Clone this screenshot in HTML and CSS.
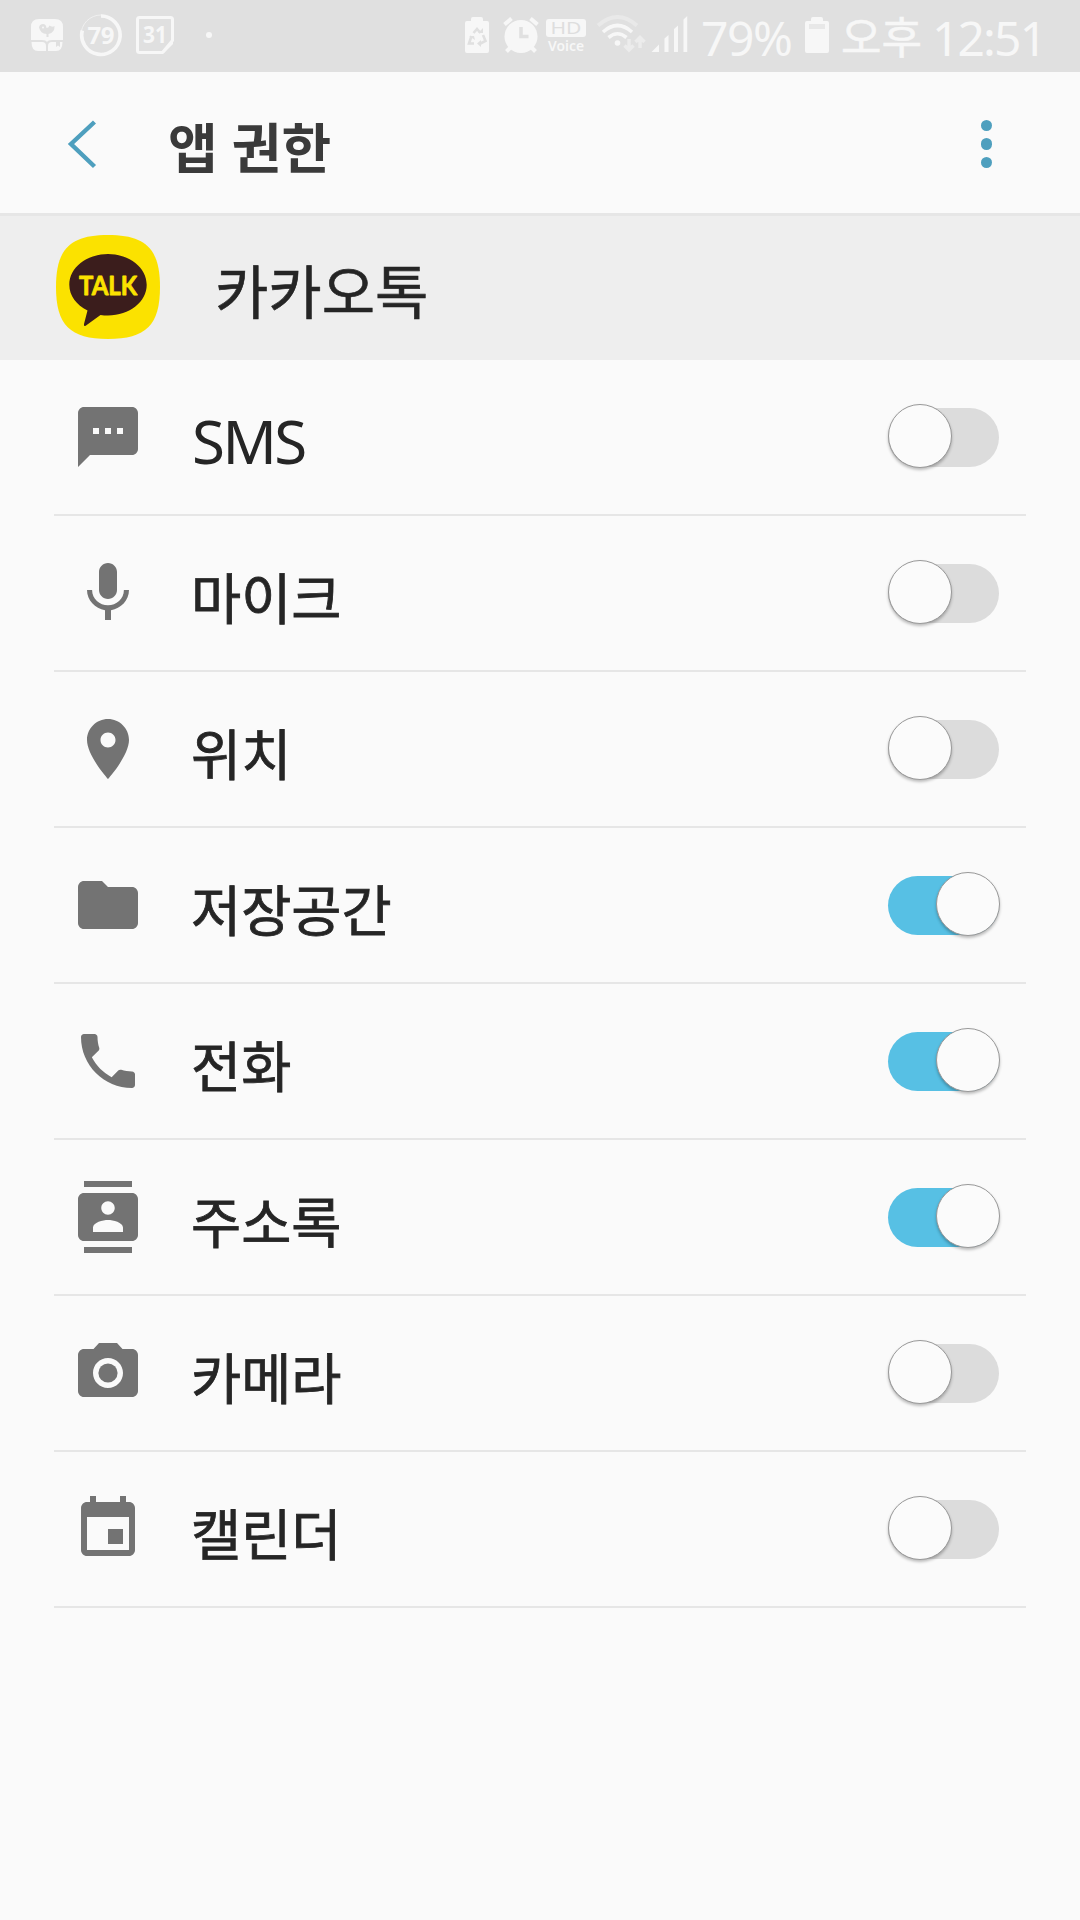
FILE: index.html
```html
<!DOCTYPE html>
<html lang="ko">
<head>
  <meta charset="utf-8">
  <meta name="viewport" content="width=device-width, initial-scale=1.0">
  <title>앱 권한</title>
  <link rel="stylesheet" href="styles.css">
</head>
<body>
  <div class="status-bar">
    <div class="status-left">
      <!-- book -->
      <svg width="34" height="72" viewBox="30 0 34 72">
        <path fill="#f7f7f7" d="M31 40V27q0-8 8-8h16q8 0 8 8v13H52q-4 0-5 2-1-2-5-2z"/>
        <path fill="#f7f7f7" d="M31.500 42H42q4 0 4 4v5h-8q-6.500 0-6.500-9zM62.500 42H60v5l-2-1.500-2 1.500v-5h-4q-4 0-4 4v5h8q6.500 0 6.500-9z"/>
        <path fill="#e0e0e0" d="M39 27.500q.5-3.500 4-3.500 3 0 3.500 4 2 0 3-2.500 2.500 2 5 .5.500 6.500-6 8v3h-2v-3q-6-.5-7.500-6.500z"/>
        <circle cx="43" cy="27.500" r="1" fill="#f7f7f7"/>
      </svg>
      <!-- battery percent ring -->
      <svg class="ring" width="44" height="72" viewBox="79 0 44 72">
        <circle cx="101" cy="35" r="20" fill="none" stroke="#f0f0f0" stroke-width="1"/>
        <path d="M101 16A19.200 19.200 0 1 1 82.300 30.500" fill="none" stroke="#f7f7f7" stroke-width="3.600"/>
        <text x="101" y="44" textLength="27">79</text>
      </svg>
      <!-- calendar day -->
      <svg class="day" width="40" height="72" viewBox="135 0 40 72">
        <path d="M139.500 17.500h31q2 0 2 2v21L162.500 52.500h-23q-2 0-2-2v-31q0-2 2-2z" fill="none" stroke="#f7f7f7" stroke-width="3"/>
        <path d="M173 40v4l-9 9h-3.500z" fill="#f7f7f7"/>
        <text x="155" y="43" textLength="24" lengthAdjust="spacingAndGlyphs">31</text>
      </svg>
      <span class="dot"></span>
    </div>
    <div class="status-right">
      <!-- power saving -->
      <svg width="24" height="72" viewBox="465 0 24 72">
        <path fill="#f7f7f7" d="M471 21v-2q0-2 2-2h8q2 0 2 2v2h4q2 0 2 2v28q0 2-2 2h-20q-2 0-2-2V23q0-2 2-2z"/>
        <path d="M473.500 33l3.500-4 3.500 4M483 35l2.500 6-5 2.500M474 43.500h-5l2.500-7.500" fill="none" stroke="#e0e0e0" stroke-width="2.600"/>
        <path d="M478 33h5v-5zM481 40v7l-4-3.500zM469 36h5l1 4z" fill="#e0e0e0"/>
      </svg>
      <!-- alarm -->
      <svg class="alarm" width="38" height="72" viewBox="502 0 38 72">
        <circle cx="521" cy="36.500" r="16.500" fill="#f7f7f7"/>
        <path d="M504.500 24.500l7-6M537.500 24.500l-7-6" stroke="#f7f7f7" stroke-width="4"/>
        <path d="M511 47l-4.500 4.500M531 47l4.500 4.500" stroke="#f7f7f7" stroke-width="4"/>
        <path d="M521 27v9.500h7.500" fill="none" stroke="#e0e0e0" stroke-width="3.500"/>
      </svg>
      <!-- HD voice -->
      <svg class="hd" width="40" height="72" viewBox="546 0 40 72">
        <rect x="546" y="19" width="40" height="18" rx="3" fill="#f7f7f7"/>
        <text class="hd-top" x="566" y="34" textLength="31" lengthAdjust="spacingAndGlyphs">HD</text>
        <text class="hd-bottom" x="566" y="51" textLength="36" lengthAdjust="spacingAndGlyphs">Voice</text>
      </svg>
      <!-- wifi -->
      <svg class="wifi" width="50" height="72" viewBox="596 0 50 72">
        <path d="M598 25.500q19.500-17 39 0" fill="none" stroke="#e9e9e9" stroke-width="4"/>
        <path d="M603 32q14.500-13 29 0M608.500 37.500q9-7.500 18 0" fill="none" stroke="#f7f7f7" stroke-width="3.600"/>
        <circle cx="617.500" cy="43" r="2.800" fill="#f7f7f7"/>
        <path d="M629 39v10M624.500 45.500l4.500 4.500 4.500-4.500M640 48V38M635.500 42l4.500-4.500 4.500 4.500" fill="none" stroke="#ececec" stroke-width="3.400"/>
      </svg>
      <!-- signal -->
      <svg class="signal" width="37" height="72" viewBox="651 0 37 72">
        <path fill="#f7f7f7" d="M651.500 52l7.500-7.500V52zM664.500 52V38.500l4-3.500v17zM674 52V29l4-3.500V52zM683.500 52V19.500l3.700-3.500v36z"/>
      </svg>
      <span class="percent">79%</span>
      <!-- battery -->
      <svg class="battery" width="24" height="72" viewBox="805 0 24 72">
        <path fill="#f7f7f7" d="M811 21v-2q0-2 2-2h8q2 0 2 2v2h4q2 0 2 2v28q0 2-2 2h-20q-2 0-2-2V23q0-2 2-2z"/>
        <path fill="#e8e8e8" d="M809 24h16v5h-16z"/>
      </svg>
      <span class="ampm">오후</span>
      <span class="clock">12:51</span>
    </div>
  </div>

  <div class="header">
    <svg class="back" width="32" height="52" viewBox="66 118 32 52">
      <path d="M94.500 122L71 144l23.500 22.500" fill="none" stroke="#4e9fbe" stroke-width="4.400"/>
    </svg>
    <h1>앱 권한</h1>
    <div class="more"><i></i><i></i><i></i></div>
  </div>

  <div class="app">
    <svg width="104" height="104" viewBox="0 0 104 104">
      <path fill="#fbe200" d="M52 0C90 0 104 14 104 52S90 104 52 104 0 90 0 52 14 0 52 0z"/>
      <path fill="#3b1d1c" d="M52 19c21.500 0 38.700 13.700 38.700 30.800S73.500 80.500 52 80.500q-4 0-7.500-.5L30 90.500q-2.500 1.500-2-1.500L31.500 75.500C20.500 70 13.300 61 13.300 49.800 13.300 32.700 30.500 19 52 19z"/>
      <text class="talk" x="52" y="59.500" textLength="58" lengthAdjust="spacingAndGlyphs">TALK</text>
    </svg>
    <p class="app-name">카카오톡</p>
  </div>

  <div class="list">
    <div class="row">
      <svg class="icon" viewBox="0 0 24 24"><path d="M20 2H4c-1.100 0-1.990.9-1.990 2L2 22l4-4h14c1.100 0 2-.9 2-2V4c0-1.100-.9-2-2-2zM9 11H7V9h2v2zm4 0h-2V9h2v2zm4 0h-2V9h2v2z"/></svg>
      <p class="label latin">SMS</p>
      <div class="switch"><span class="knob"></span></div>
    </div>
    <div class="row">
      <svg class="icon" viewBox="0 0 24 24"><path d="M12 14c1.660 0 3-1.340 3-3V5c0-1.660-1.340-3-3-3S9 3.340 9 5v6c0 1.660 1.340 3 3 3zm5.300-3c0 3-2.540 5.100-5.300 5.100S6.700 14 6.700 11H5c0 3.410 2.720 6.230 6 6.720V21h2v-3.280c3.280-.48 6-3.300 6-6.720h-1.700z"/></svg>
      <p class="label">마이크</p>
      <div class="switch"><span class="knob"></span></div>
    </div>
    <div class="row">
      <svg class="icon" viewBox="0 0 24 24"><path d="M12 2C8.130 2 5 5.130 5 9c0 5.250 7 13 7 13s7-7.750 7-13c0-3.870-3.130-7-7-7zm0 9.500c-1.380 0-2.500-1.120-2.500-2.500s1.120-2.500 2.500-2.500 2.500 1.120 2.500 2.500-1.120 2.500-2.500 2.500z"/></svg>
      <p class="label">위치</p>
      <div class="switch"><span class="knob"></span></div>
    </div>
    <div class="row">
      <svg class="icon" viewBox="0 0 24 24"><path d="M10 4H4c-1.100 0-1.990.9-1.990 2L2 18c0 1.100.9 2 2 2h16c1.100 0 2-.9 2-2V8c0-1.100-.9-2-2-2h-8l-2-2z"/></svg>
      <p class="label">저장공간</p>
      <div class="switch on"><span class="knob"></span></div>
    </div>
    <div class="row">
      <svg class="icon" viewBox="0 0 24 24"><path d="M6.620 10.790c1.440 2.830 3.760 5.140 6.590 6.590l2.200-2.200c.27-.27.67-.36 1.020-.24 1.120.37 2.330.57 3.570.57.550 0 1 .45 1 1V20c0 .55-.45 1-1 1-9.390 0-17-7.610-17-17 0-.55.45-1 1-1h3.500c.55 0 1 .45 1 1 0 1.250.2 2.450.57 3.570.110.350.030.740-.250 1.020l-2.200 2.200z"/></svg>
      <p class="label">전화</p>
      <div class="switch on"><span class="knob"></span></div>
    </div>
    <div class="row">
      <svg class="icon" viewBox="0 0 24 24"><path d="M20 0H4v2h16V0zM4 24h16v-2H4v2zM20 4H4c-1.100 0-2 .9-2 2v12c0 1.100.9 2 2 2h16c1.100 0 2-.9 2-2V6c0-1.100-.9-2-2-2zm-8 2.750c1.240 0 2.250 1.010 2.250 2.250s-1.010 2.250-2.250 2.250S9.750 10.240 9.750 9 10.760 6.750 12 6.750zM17 17H7v-1.500c0-1.670 3.330-2.500 5-2.500s5 .83 5 2.500V17z"/></svg>
      <p class="label">주소록</p>
      <div class="switch on"><span class="knob"></span></div>
    </div>
    <div class="row">
      <svg class="icon" viewBox="0 0 24 24"><circle cx="12" cy="12" r="3.200"/><path d="M9 2L7.170 4H4c-1.100 0-2 .9-2 2v12c0 1.100.9 2 2 2h16c1.100 0 2-.9 2-2V6c0-1.100-.9-2-2-2h-3.170L15 2H9zm3 15c-2.760 0-5-2.240-5-5s2.240-5 5-5 5 2.240 5 5-2.240 5-5 5z"/></svg>
      <p class="label">카메라</p>
      <div class="switch"><span class="knob"></span></div>
    </div>
    <div class="row">
      <svg class="icon" viewBox="0 0 24 24"><path d="M17 12h-5v5h5v-5zM16 1v2H8V1H6v2H5c-1.110 0-1.990.9-1.990 2L3 19c0 1.100.89 2 2 2h14c1.100 0 2-.9 2-2V5c0-1.100-.9-2-2-2h-1V1h-2zm3 18H5V8h14v11z"/></svg>
      <p class="label">캘린더</p>
      <div class="switch"><span class="knob"></span></div>
    </div>
  </div>
</body>
</html>
```
FILE: styles.css
```css
body {
  font-family: "Noto Sans", "Noto Sans CJK KR", sans-serif;
  background-color: #fafafa;
  color: #252525;
  margin: 0;
}

p, h1 {
  margin: 0;
}

svg {
  display: block;
  flex: none;
}

/* status bar */
.status-bar {
  display: flex;
  justify-content: space-between;
  height: 72px;
  padding: 0 38px 0 30px;
  background-color: #e0e0e0;
  color: #f7f7f7;
}

.status-left, .status-right {
  display: flex;
  white-space: nowrap;
}

.status-left text {
  font-family: "Open Sans", sans-serif;
  font-weight: bold;
  fill: #f7f7f7;
  text-anchor: middle;
}

.ring {
  margin-left: 15px;
}

.ring text {
  font-size: 24px;
}

.day {
  margin-left: 12px;
}

.day text {
  font-size: 23px;
}

.dot {
  width: 6px;
  height: 6px;
  margin: 32px 0 0 31px;
  border-radius: 50%;
  background-color: #f7f7f7;
}

.alarm {
  margin-left: 13px;
}

.hd {
  margin-left: 6px;
}

.hd text {
  text-anchor: middle;
}

.hd-top {
  font-size: 17px;
  fill: #dedede;
}

.hd-bottom {
  font-size: 14px;
  font-weight: 600;
  fill: #f7f7f7;
}

.wifi {
  margin-left: 10px;
}

.signal {
  margin-left: 5px;
}

.percent, .ampm, .clock {
  font-size: 48px;
  line-height: 75px;
}

.percent {
  width: 90px;
  margin-left: 13px;
  letter-spacing: -1.5px;
}

.battery {
  margin-left: 14px;
}

.ampm {
  width: 80px;
  margin-left: 12px;
  font-size: 44px;
  -webkit-text-stroke: 0.6px #f7f7f7;
}

.clock {
  width: 110px;
  margin-left: 11px;
  letter-spacing: -1.9px;
}

/* title */
.header {
  display: flex;
  align-items: center;
  height: 141px;
  padding: 0 88px 0 66px;
  border-bottom: 3px solid #e6e6e6;
}

.back {
  margin-top: 3px;
}

h1 {
  flex: 1;
  margin: 10px 0 0 70px;
  color: #3a3a3a;
  font-size: 54px;
  font-weight: bold;
  line-height: 80px;
}

.more {
  display: flex;
  flex-direction: column;
  gap: 7px;
  margin-top: 3px;
}

.more i {
  width: 11.400px;
  height: 11.400px;
  border-radius: 50%;
  background-color: #4e9fbe;
}

/* selected app */
.app {
  display: flex;
  align-items: center;
  height: 142px;
  padding: 0 56px 2px;
  background-color: #eee;
}

.talk {
  font-family: Lato, sans-serif;
  font-size: 26px;
  font-weight: bold;
  fill: #fbe200;
  stroke: #fbe200;
  stroke-width: 0.8px;
  stroke-linejoin: round;
  text-anchor: middle;
}

.app-name {
  margin: 10px 0 0 55px;
  font-size: 58px;
  line-height: 80px;
  -webkit-text-stroke: 0.6px #252525;
}

/* permissions */
.list {
  margin: 0 54px;
}

.row {
  display: flex;
  align-items: center;
  height: 154px;
  padding: 0 27px 0 18px;
  border-bottom: 2px solid #e6e6e6;
}

.icon {
  width: 72px;
  height: 72px;
  fill: #737373;
  overflow: visible;
}

.label {
  flex: 1;
  margin: 10px 0 0 47px;
  font-size: 54.500px;
  line-height: 80px;
  -webkit-text-stroke: 0.8px #252525;
}

.latin {
  margin: 7px 0 0 48px;
  font-size: 60px;
  letter-spacing: -2.500px;
  -webkit-text-stroke: 0;
}

.switch {
  display: flex;
  align-items: center;
  width: 111px;
  height: 59px;
  border-radius: 30px;
  background-color: #dcdcdc;
}

.knob {
  width: 62px;
  height: 62px;
  margin-bottom: 3px;
  border: 1px solid #999;
  border-radius: 50%;
  background-color: #fbfbfb;
  box-shadow: 0 2px 3px rgba(0, 0, 0, 0.25);
}

.on {
  justify-content: flex-end;
  background-color: #57c0e4;
}

.on .knob {
  margin-right: -1px;
}
```
